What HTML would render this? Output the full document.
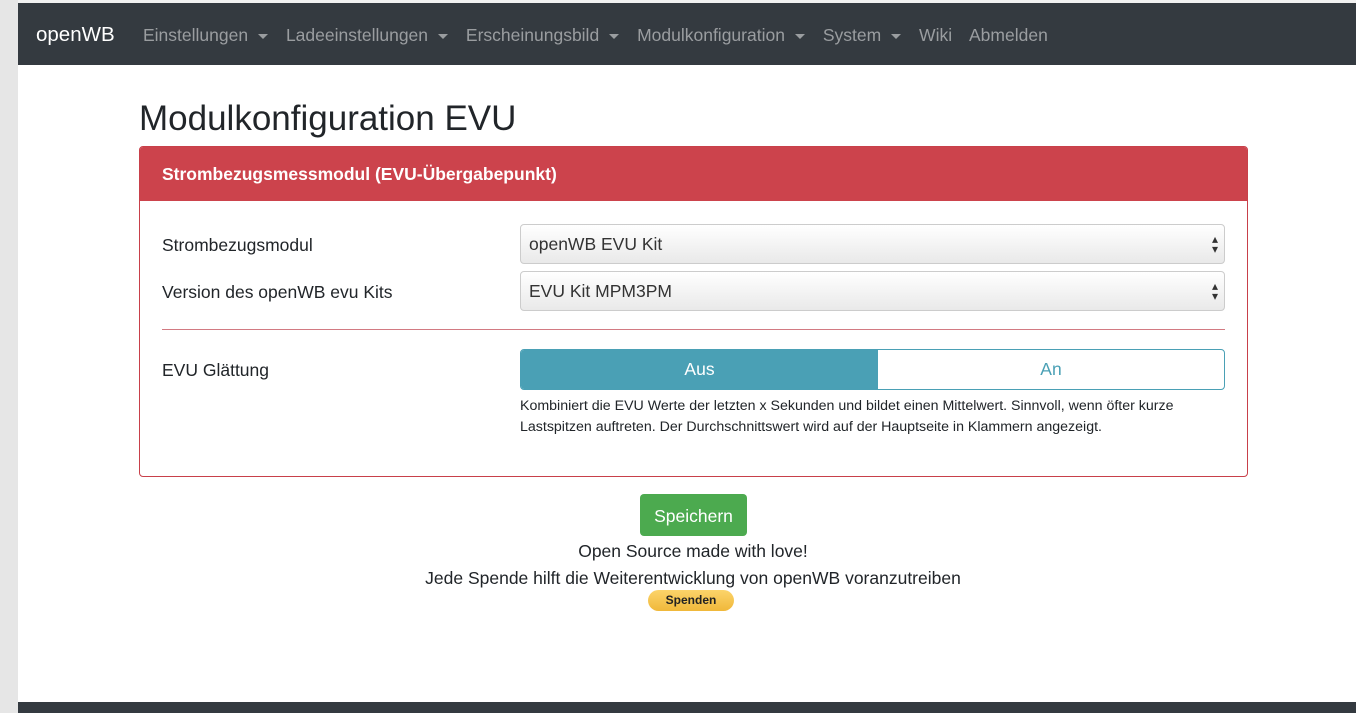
<!DOCTYPE html>
<html><head><meta charset="utf-8"><style>
body{margin:0;width:1356px;height:713px;overflow:hidden;background:#ececec;font-family:"Liberation Sans",sans-serif;position:relative}
.left{position:absolute;left:0;top:0;width:18px;height:713px;background:#e6e6e6}
.page{position:absolute;left:18px;top:0;width:1338px;height:713px;background:#fff}
.topstrip{position:absolute;left:0;top:0;width:1338px;height:3px;background:#f1f1f1}
nav{position:absolute;left:0;top:3px;width:1338px;height:62px;background:#343a40}
nav .brand{position:absolute;left:18px;top:20px;color:#fff;font-size:20.5px}
nav .items{position:absolute;left:125px;top:22px;color:#9a9da0;font-size:17.5px;white-space:nowrap}
nav .items span{margin-right:13px}
.caret{display:inline-block;width:0;height:0;border-left:5px solid transparent;border-right:5px solid transparent;border-top:5px solid #9a9da0;vertical-align:middle;margin-left:10px}
h1{position:absolute;left:121px;top:99px;margin:0;font-size:35px;font-weight:400;color:#212529}
.card{position:absolute;left:121px;top:146px;width:1107px;height:329px;border:1px solid #c8404a;border-radius:4px;overflow:hidden}
.card .hd{height:54px;background:#cc434c;color:#fff;font-weight:bold;font-size:17.5px;line-height:54px;padding-left:22px}
.lbl{position:absolute;left:22px;font-size:17.5px;color:#212529}
.sel{position:absolute;left:380px;height:40px;border:1px solid #ccc;border-radius:4px;background:linear-gradient(#fff,#e9e9e9);font-size:17.5px;line-height:38px;padding-left:8px;box-sizing:border-box;width:705px;color:#333}
.sel:after{content:"▴\A▾";white-space:pre;position:absolute;right:6px;top:9px;font-size:12px;line-height:10px;color:#333}
.hr{position:absolute;left:22px;top:182px;width:1063px;height:1px;background:#d27a82}
.tog{position:absolute;left:380px;top:202px;width:705px;height:41px;border:1px solid #4aa0b5;border-radius:4px;box-sizing:border-box;overflow:hidden;font-size:17.5px;line-height:39px;text-align:center}
.tog .a{position:absolute;left:0;top:0;width:357px;height:100%;background:#4aa0b5;color:#fff}
.tog .b{position:absolute;left:357px;top:0;right:0;height:100%;color:#4aa0b5}
.help{position:absolute;left:380px;top:249px;width:705px;font-size:14.2px;line-height:21px;color:#212529}
.btn{position:absolute;left:622px;top:494px;width:107px;height:42px;background:#4caa4f;border-radius:4px;color:#fff;font-size:17.5px;line-height:44px;text-align:center}
.t{position:absolute;left:0;width:1350px;text-align:center;font-size:17.5px;color:#212529}
.sp{position:absolute;left:630px;top:590px;width:86px;height:21px;border-radius:11px;background:linear-gradient(#fcd46a,#f0b83a);font-size:12px;font-weight:bold;text-align:center;line-height:21px;color:#222}
.foot{position:absolute;left:0;top:702px;width:1338px;height:11px;background:#343a40}
</style></head><body>
<div class="left"></div>
<div class="page">
<div class="topstrip"></div>
<nav><div class="brand">openWB</div>
<div class="items"><span>Einstellungen<i class="caret"></i></span> <span>Ladeeinstellungen<i class="caret"></i></span> <span>Erscheinungsbild<i class="caret"></i></span> <span>Modulkonfiguration<i class="caret"></i></span> <span>System<i class="caret"></i></span> <span>Wiki</span> <span>Abmelden</span></div></nav>
<h1>Modulkonfiguration EVU</h1>
<div class="card"><div class="hd">Strombezugsmessmodul (EVU-Übergabepunkt)</div>
<div class="lbl" style="top:88px">Strombezugsmodul</div>
<div class="sel" style="top:77px">openWB EVU Kit</div>
<div class="lbl" style="top:135px">Version des openWB evu Kits</div>
<div class="sel" style="top:124px">EVU Kit MPM3PM</div>
<div class="hr"></div>
<div class="lbl" style="top:213px">EVU Glättung</div>
<div class="tog"><div class="a">Aus</div><div class="b">An</div></div>
<div class="help">Kombiniert die EVU Werte der letzten x Sekunden und bildet einen Mittelwert. Sinnvoll, wenn öfter kurze Lastspitzen auftreten. Der Durchschnittswert wird auf der Hauptseite in Klammern angezeigt.</div>
</div>
<div class="btn">Speichern</div>
<div class="t" style="top:541px">Open Source made with love!</div>
<div class="t" style="top:568px">Jede Spende hilft die Weiterentwicklung von openWB voranzutreiben</div>
<div class="sp">Spenden</div>
<div class="foot"></div>
</div>
</body></html>
